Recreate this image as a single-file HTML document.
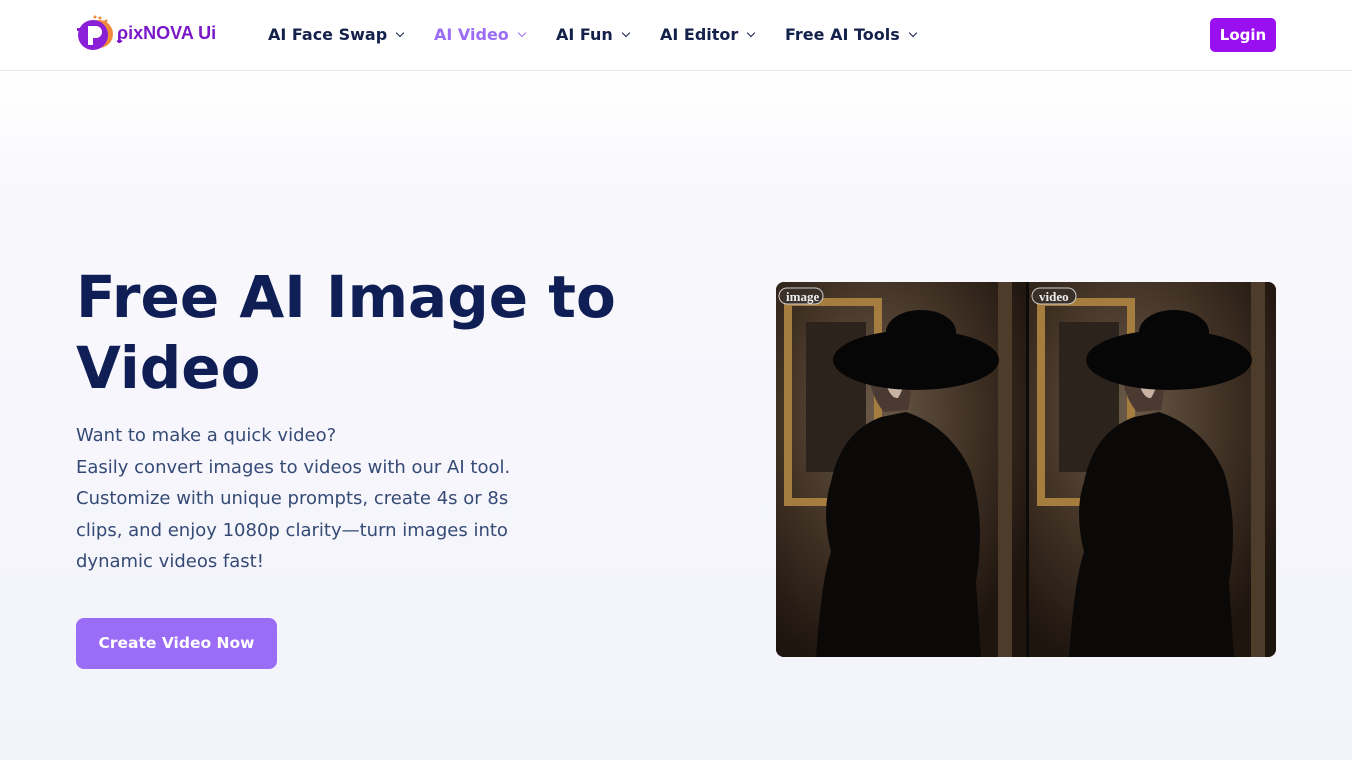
<!DOCTYPE html>
<html><head><meta charset="utf-8"><style>
*{margin:0;padding:0;box-sizing:border-box}
body{width:1352px;height:760px;overflow:hidden;font-family:"DejaVu Sans","Liberation Sans",sans-serif;background:linear-gradient(#fff 70px,#f8f8fc 200px,#f3f3fb 760px)}
header{height:71px;border-bottom:1px solid #e6e6ec;background:#fff;position:relative}
.logo{position:absolute;left:77px;top:14px;display:flex;align-items:center}
.logo .t{font-family:"Liberation Sans",sans-serif;color:#7a18c8;font-size:18px;font-weight:bold;margin-left:2px;letter-spacing:0}
nav{position:absolute;left:0;top:0;height:70px;font-weight:bold;font-size:16px;color:#14214b}
nav span{position:absolute;top:25px;display:flex;align-items:center;white-space:nowrap}
nav span i{display:inline-block;width:6px;height:6px;border-right:1.3px solid currentColor;border-bottom:1.3px solid currentColor;transform:rotate(45deg);margin-left:10px;margin-top:-4px}
nav .a{color:#9b6cf6}
.login{position:absolute;left:1210px;top:18px;width:66px;height:34px;background:#9a0ff0;color:#fff;border-radius:5px;font-weight:bold;font-size:15px;text-align:center;line-height:34px}
h1{position:absolute;left:76px;top:262px;font-size:58px;line-height:71px;color:#0f1f55;font-weight:bold}
p{position:absolute;left:76px;top:420px;font-size:18px;line-height:31.5px;color:#354a75;width:450px}
.btn{position:absolute;left:76px;top:618px;width:201px;height:51px;background:#9b6cf6;color:#fff;border-radius:8px;font-weight:bold;font-size:15.5px;text-align:center;line-height:51px}
.pic{position:absolute;left:776px;top:282px;width:500px;height:375px;border-radius:8px;overflow:hidden;background:#1a120c}
</style></head><body>
<header>
<div class="logo"><svg width="38" height="38" viewBox="0 0 38 38"><circle cx="22" cy="20" r="14" fill="#f08a3a"/><circle cx="16" cy="21" r="15" fill="#8b1fd8"/><rect x="0" y="14" width="8" height="3" fill="#8b1fd8"/><rect x="2" y="22" width="6" height="3" fill="#8b1fd8"/><path d="M11 12h8a6 6 0 0 1 0 12h-3v7h-5z" fill="#fff"/><circle cx="18" cy="3" r="1.5" fill="#f08a3a"/><circle cx="23" cy="4" r="1.5" fill="#f08a3a"/><circle cx="29" cy="7" r="1.5" fill="#f08a3a"/></svg><span class="t">ϼixNOVA Ui</span></div>
<nav><span style="left:268px">AI Face Swap<i></i></span><span class="a" style="left:434px">AI Video<i></i></span><span style="left:556px">AI Fun<i></i></span><span style="left:660px">AI Editor<i></i></span><span style="left:785px">Free AI Tools<i></i></span></nav>
<div class="login">Login</div>
</header>
<h1>Free AI Image to<br>Video</h1>
<p>Want to make a quick video?<br>Easily convert images to videos with our AI tool. Customize with unique prompts, create 4s or 8s clips, and enjoy 1080p clarity—turn images into dynamic videos fast!</p>
<div class="btn">Create Video Now</div>
<div class="pic"><svg width="500" height="375" viewBox="0 0 500 375">
<defs>
<radialGradient id="bg" cx="0.4" cy="0.35" r="0.7"><stop offset="0" stop-color="#6b5a48"/><stop offset="0.6" stop-color="#3d2e22"/><stop offset="1" stop-color="#1e150f"/></radialGradient>
<g id="h">
<rect width="250" height="375" fill="url(#bg)"/>
<rect x="12" y="20" width="90" height="200" fill="none" stroke="#a57d3e" stroke-width="8"/>
<rect x="30" y="40" width="60" height="150" fill="#2c231c"/>
<rect x="222" y="0" width="14" height="375" fill="#4e3c2a"/>
<path d="M40 375 Q45 300 55 270 Q45 230 55 200 Q65 150 105 135 L130 130 Q175 145 195 190 Q210 240 200 300 L205 375Z" fill="#0b0908"/>
<path d="M90 60 Q90 110 108 130 L132 128 Q140 90 128 55Z" fill="#4a3a32"/>
<path d="M103 70 Q110 118 122 116 Q132 100 130 75Z" fill="#c8b3a5"/>
<ellipse cx="140" cy="78" rx="83" ry="30" fill="#070606"/>
<ellipse cx="145" cy="50" rx="35" ry="22" fill="#070606"/>
<rect x="3" y="6" width="44" height="16" rx="8" fill="#3a3028" stroke="#ccc" stroke-width="1"/>
</g>
</defs>
<use href="#h"/><use href="#h" x="253"/>
<rect x="250" y="0" width="3" height="375" fill="#0d0a08"/>
<text x="10" y="19" font-family="Liberation Serif,serif" font-size="13" font-weight="bold" fill="#eee">image</text>
<text x="263" y="19" font-family="Liberation Serif,serif" font-size="13" font-weight="bold" fill="#eee">video</text>
</svg></div>
</body></html>
